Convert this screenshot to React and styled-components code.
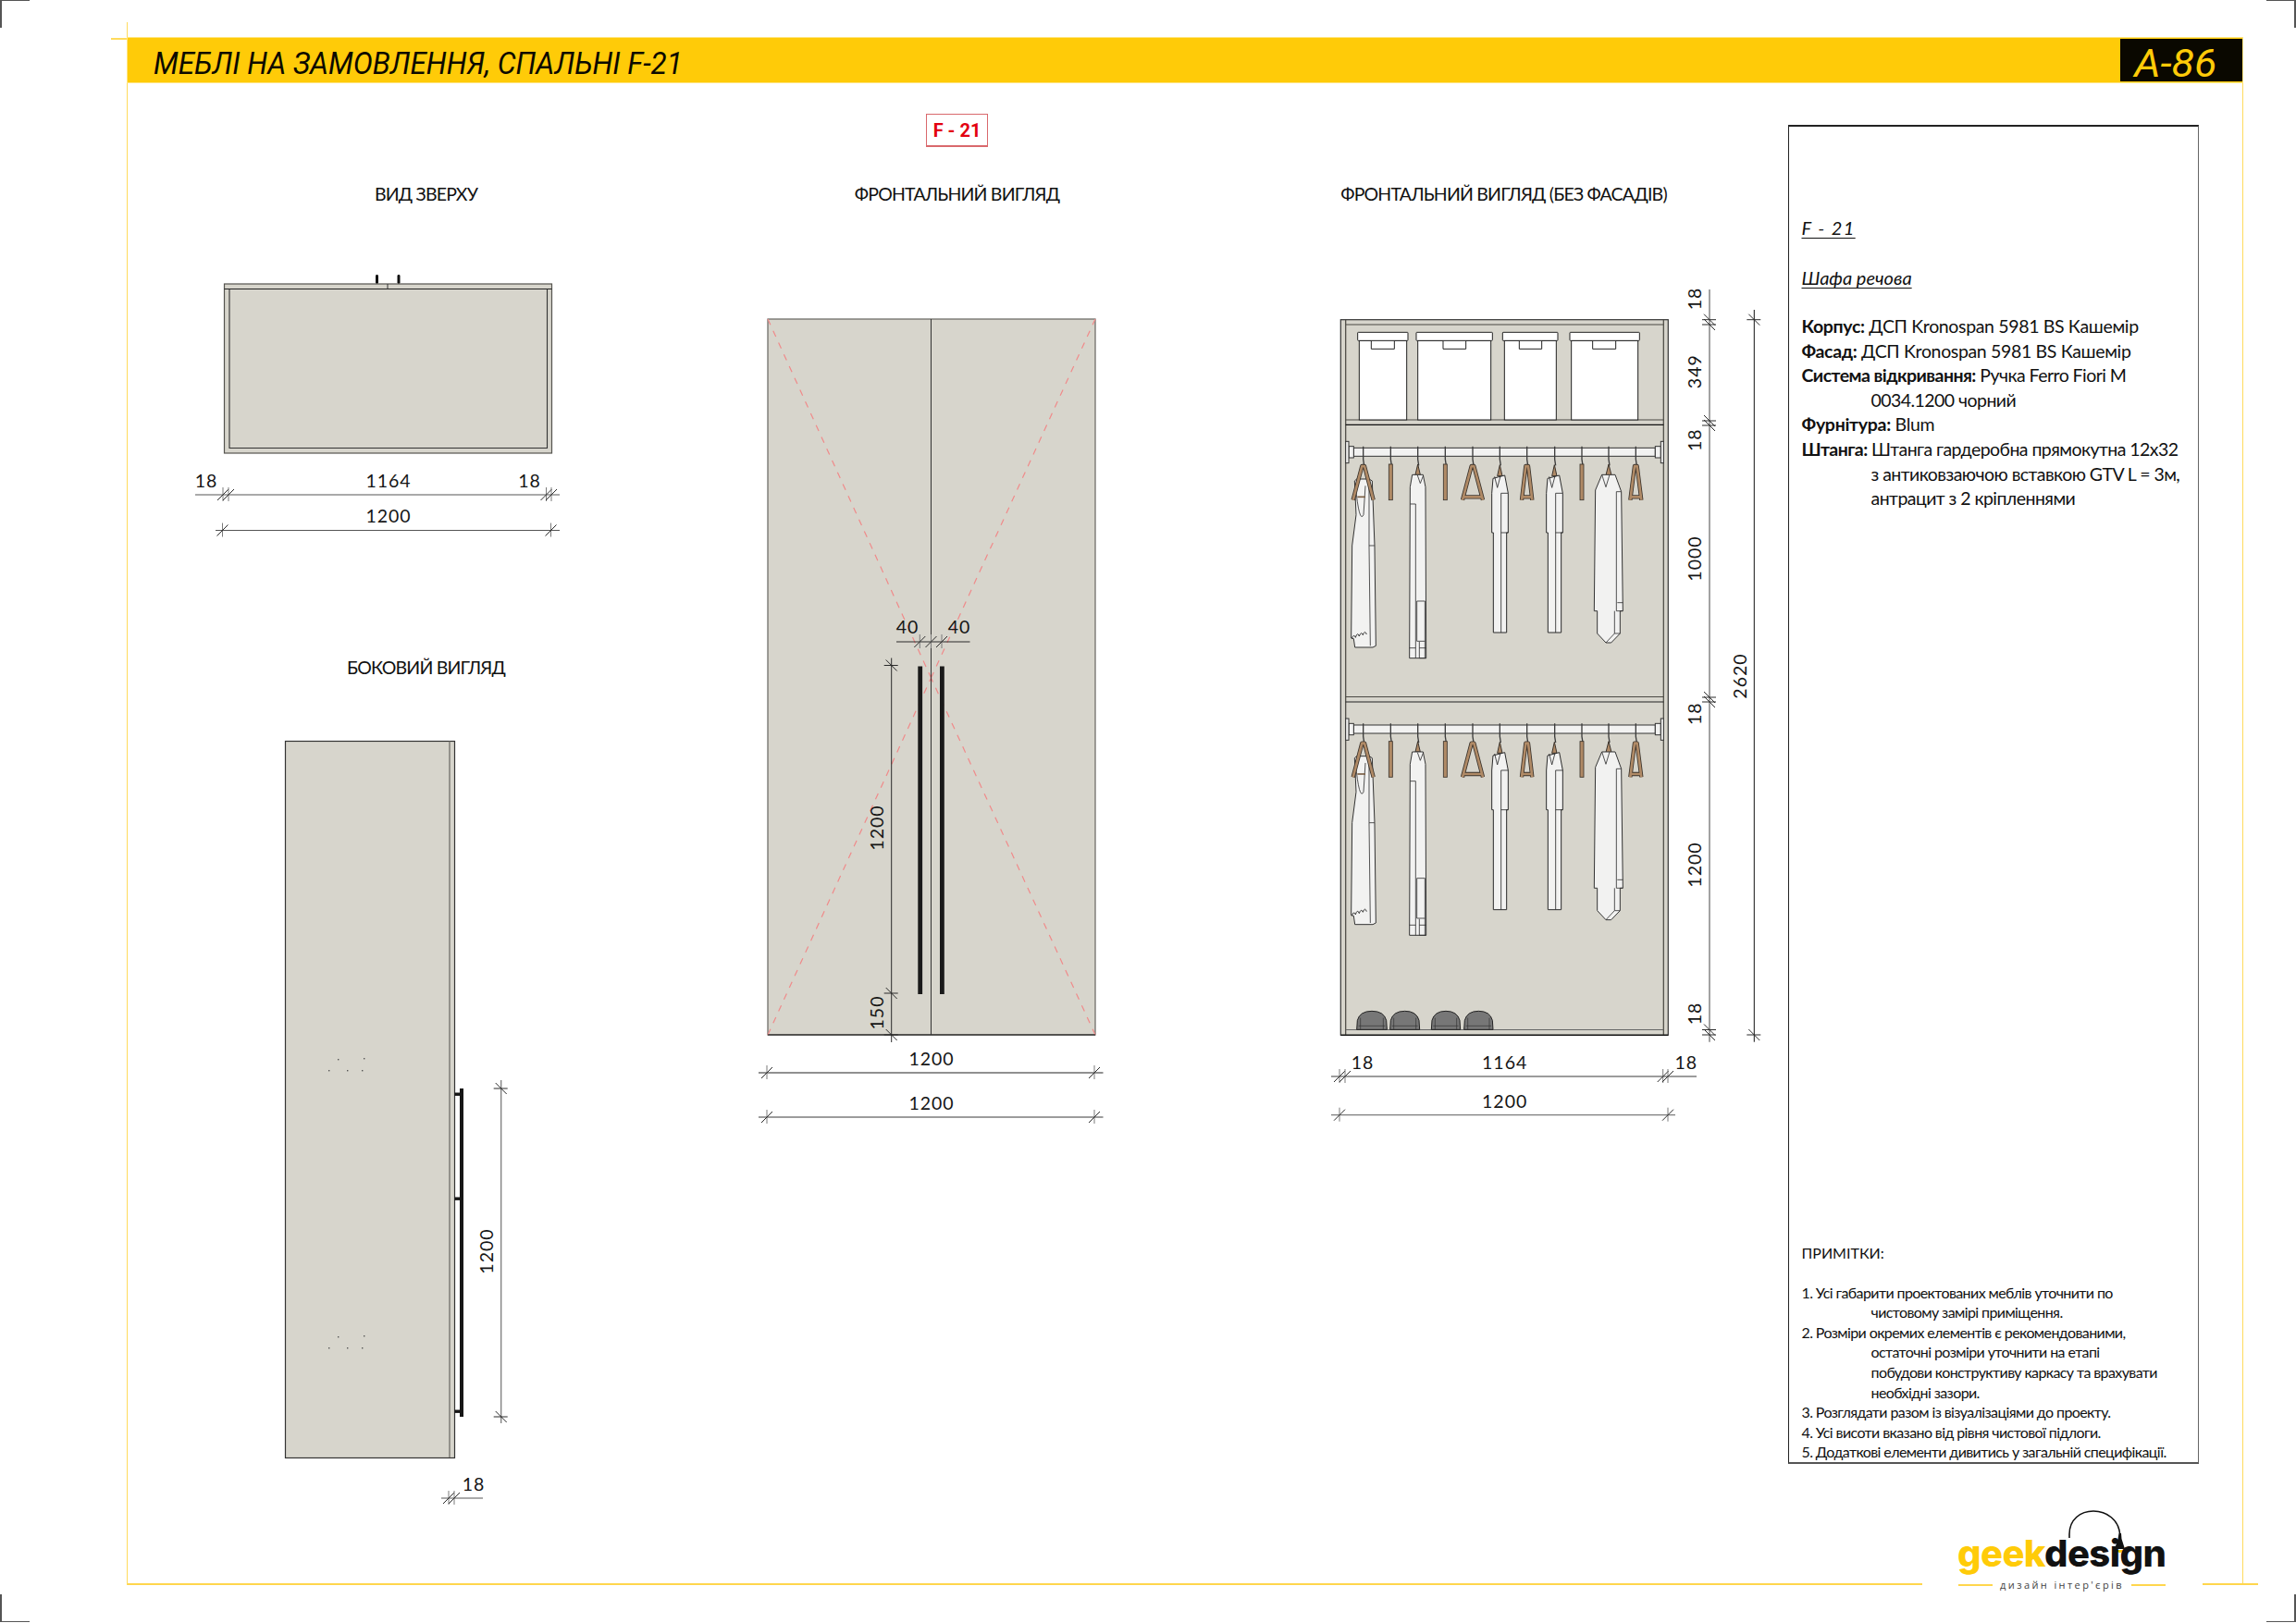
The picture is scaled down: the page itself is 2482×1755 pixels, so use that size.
import React from 'react'
import styled, { createGlobalStyle } from 'styled-components'

const GlobalStyle = createGlobalStyle`
html, body {
    margin: 0;
    padding: 0;
    background: #fff;
}
body {
    font-family: Lato, "Noto Sans", sans-serif;
    color: #111;
}
`

const DARK = '#2b2b2b'
const GREY = '#7b7b7b'
const FILL = '#d7d5cc'
const BROWN = '#b08a66'
const CLOTH = '#f2f2f1'

// dimension helpers, coordinates are sheet pixels
const HDim = ({ x1, x2, y, ticks, color = DARK, width = 1 }) => (
    <g>
        <line x1={x1} x2={x2} y1={y} y2={y} stroke={color} strokeWidth={width} />
        {ticks.map((t) => (
            <g key={t} stroke={DARK} strokeWidth="1">
                <line x1={t} x2={t} y1={y - 8} y2={y + 7} stroke={GREY} />
                <line x1={t - 6} x2={t + 6} y1={y + 6} y2={y - 6} />
            </g>
        ))}
    </g>
)

const VDim = ({ x, y1, y2, ticks, color = DARK, width = 1 }) => (
    <g>
        <line x1={x} x2={x} y1={y1} y2={y2} stroke={color} strokeWidth={width} />
        {ticks.map((t) => (
            <g key={t} stroke={DARK} strokeWidth="1">
                <line x1={x - 8} x2={x + 7} y1={t} y2={t} />
                <line x1={x - 6} x2={x + 6} y1={t - 6} y2={t + 6} />
            </g>
        ))}
    </g>
)

const Num = ({ x, y, children }) => <DimText x={x} y={y + 1} textAnchor="middle">{children}</DimText>
const VNum = ({ x, y, children }) => (
    <DimText x={x} y={y} textAnchor="middle" transform={`rotate(-90 ${x} ${y})`}>{children}</DimText>
)

const TopView = () => (
    <DrawingSvg $w={420} $h={310} viewBox="200 280 420 310">
        <rect x="406" y="297" width="3" height="10" rx="1.4" fill="#111" />
        <rect x="429.5" y="297" width="3" height="10" rx="1.4" fill="#111" />
        <rect x="242.5" y="307" width="354" height="183" fill={FILL} stroke="#55544f" strokeWidth="1.2" />
        <line x1="242.5" x2="596.5" y1="312.5" y2="312.5" stroke="#222" />
        <line x1="419" x2="419" y1="307" y2="312.5" stroke="#333" />
        <path d="M248 312.5 V484.5 H591.5 V312.5" fill="none" stroke="#333" strokeWidth="1.1" />
        <HDim x1={211} x2={605} y={535} ticks={[241, 247, 590.5, 596]} color="#555" />
        <HDim x1={233} x2={605} y={573.5} ticks={[240.5, 595.5]} color="#555" />
        <Num x={223} y={525.5}>18</Num>
        <Num x={420} y={525.5}>1164</Num>
        <Num x={572.5} y={525.5}>18</Num>
        <Num x={420} y={564}>1200</Num>
    </DrawingSvg>
)

const sideDots = [[365, 1145], [393, 1144], [355, 1157], [375, 1157], [391, 1157], [365, 1445], [393, 1444], [355, 1457], [375, 1457], [391, 1457]]

const SideView = () => (
    <DrawingSvg $w={420} $h={860} viewBox="200 780 420 860">
        <rect x="308.5" y="801.5" width="183" height="775" fill={FILL} stroke="#333" strokeWidth="1.2" />
        <line x1="486" x2="486" y1="801.5" y2="1576" stroke="#77766f" strokeWidth="1.4" />
        {sideDots.map(([x, y]) => <rect key={x + '-' + y} x={x} y={y} width="1.4" height="1.4" fill="#555" />)}
        <rect x="497" y="1177" width="4" height="355" fill="#161616" />
        <rect x="491.5" y="1181.5" width="6" height="3.4" fill="#161616" />
        <rect x="491.5" y="1294.5" width="6" height="3.4" fill="#161616" />
        <rect x="491.5" y="1524.5" width="6" height="3.4" fill="#161616" />
        <VDim x={541.7} y1={1168} y2={1539} ticks={[1177, 1532]} color={GREY} width={1.3} />
        <VNum x={533} y={1353}>1200</VNum>
        <HDim x1={477} x2={522} y={1620} ticks={[485, 491]} color="#555" />
        <Num x={512} y={1611}>18</Num>
    </DrawingSvg>
)

const FrontView = () => (
    <DrawingSvg $w={390} $h={900} viewBox="810 335 390 900">
        <rect x="830" y="345" width="354" height="774" fill={FILL} stroke="#66655f" strokeWidth="1.2" />
        <g stroke="#f08a8a" strokeWidth="1.2" strokeDasharray="7 7" fill="none">
            <line x1="830" y1="345" x2="1006.5" y2="733" />
            <line x1="1184" y1="345" x2="1006.5" y2="733" />
            <line x1="830" y1="1119" x2="1006.5" y2="733" />
            <line x1="1184" y1="1119" x2="1006.5" y2="733" />
        </g>
        <line x1="830" x2="1184" y1="1119" y2="1119" stroke="#111" strokeWidth="1.2" />
        <line x1="1006.5" x2="1006.5" y1="345" y2="1119" stroke="#333" />
        <rect x="992.3" y="720.5" width="4.8" height="354.5" fill="#1a1a1a" />
        <rect x="1016" y="720.5" width="4.8" height="354.5" fill="#1a1a1a" />
        <HDim x1={969} x2={1048.5} y={694} ticks={[994.3, 1006.5, 1018]} />
        <VDim x={963.7} y1={711.5} y2={1127} ticks={[719.5, 1074, 1119]} />
        <Num x={981} y={684}>40</Num>
        <Num x={1037} y={684}>40</Num>
        <VNum x={955} y={895}>1200</VNum>
        <VNum x={955} y={1095}>150</VNum>
        <HDim x1={820} x2={1192.5} y={1160} ticks={[829, 1183]} color="#222" />
        <HDim x1={820} x2={1192.5} y={1208} ticks={[829, 1183]} color={GREY} width={1.4} />
        <Num x={1007} y={1150.5}>1200</Num>
        <Num x={1007} y={1198.5}>1200</Num>
    </DrawingSvg>
)

// one hanging set, in crop units (3 per sheet pixel), rail at y=553..580
const hookXs = [131, 220, 308, 397, 486, 574, 662, 752, 840, 927, 1015]

const Triangle = ({ cx, half, bar = true }) => {
    const d = `M${cx - half} 722 L${cx - 4} 612 H${cx + 4} L${cx + half} 722` + (bar ? ` M${cx - half} 712 H${cx + half}` : '')
    return (
        <g fill="none" strokeLinejoin="round">
            <path d={d} stroke="#3a332c" strokeWidth="13" />
            <path d={d} stroke={BROWN} strokeWidth="8" />
        </g>
    )
}

const Flat = ({ cx }) => <rect x={cx - 6} y="606" width="12" height="116" fill={BROWN} stroke="#3a332c" strokeWidth="2.5" />

const Trousers = ({ dx }) => (
    <g transform={`translate(${dx} 0)`}>
        <path d="M566 644 L574 608 L582 644 Z" fill={BROWN} stroke="#3a332c" strokeWidth="3" />
        <path d="M552 652 L590 642 L601 700 V828 H596 V1152 H553 V828 H548 V700 Z" fill={CLOTH} stroke="#2a2a2a" strokeWidth="3" />
        <path d="M578 700 H601 M578 700 V1152 M578 828 H601 M557 646 L566 682 L576 644" fill="none" stroke="#2a2a2a" strokeWidth="2.5" />
    </g>
)

const Hanging = ({ dy }) => (
    <g transform={`translate(0 ${dy})`} stroke="#333">
        <rect x="100" y="553" width="978" height="27" fill={CLOTH} strokeWidth="3" />
        <rect x="84" y="548" width="16" height="37" fill={CLOTH} strokeWidth="3" />
        <rect x="74" y="532" width="10" height="70" fill={CLOTH} strokeWidth="3" />
        <rect x="1078" y="548" width="18" height="37" fill={CLOTH} strokeWidth="3" />
        <rect x="1096" y="532" width="9" height="70" fill={CLOTH} strokeWidth="3" />
        {hookXs.map((x) => <path key={x} d={`M${x} 548 V590 L${x + 3} 610`} fill="none" stroke="#3c3c3c" strokeWidth="4" />)}
        <Flat cx={220} />
        <Flat cx={397} />
        <Flat cx={840} />
        <Triangle cx={486} half={33} />
        <Triangle cx={662} half={17} />
        <Triangle cx={1015} half={18} />

        {/* dress on the left */}
        <path d="M103 660 L110 654 L150 654 L160 660 L168 870 L172 1195 L162 1200 L104 1200 L100 1172 L92 1170 L95 870 L108 770 Z" fill={CLOTH} strokeWidth="3" />
        <path d="M106 676 Q118 800 132 770 L138 676 M150 654 V870 H168 M150 870 L154 1195" fill="none" strokeWidth="2.5" />
        <path d="M94 1172 q6 -18 12 -4 q6 -20 12 -4 q6 -18 12 -4 q6 -18 12 -2" fill="none" strokeWidth="3" />
        <Triangle cx={131} half={33} bar={false} />
        <path d="M112 712 H138" stroke="#7a5f45" strokeWidth="5" />

        {/* long trousers */}
        <path d="M300 640 L308 606 L316 640 Z" fill={BROWN} stroke="#3a332c" strokeWidth="3" />
        <path d="M290 640 L325 640 L333 680 L335 1235 H281 L283 680 Z" fill={CLOTH} strokeWidth="3" />
        <path d="M283 735 H301 M301 735 V1235 M305 1050 H331 V1235 M305 1050 V1180 H331 M281 1202 H301 M313 1182 V1235 H335 M313 1202 H335" fill="none" strokeWidth="2.5" />
        <path d="M307 642 L316 668 L326 642" fill="none" strokeWidth="2.5" />

        <Trousers dx={0} />
        <Trousers dx={177} />

        {/* coat */}
        <path d="M912 665 L927 606 L942 665 Z" fill={BROWN} stroke="#3a332c" strokeWidth="3" />
        <path d="M905 640 L948 640 L968 695 L973 1082 H964 V1155 L935 1185 H918 L890 1155 V1082 H880 L884 690 Z" fill={CLOTH} strokeWidth="3" />
        <path d="M952 695 H968 M952 695 V1082 H973 M955 1055 H973 M946 1082 V1155 H964 M946 1155 L918 1185 M905 640 L918 680 L930 640" fill="none" strokeWidth="2.5" />
    </g>
)

const boxes = [
    { lid: [113, 276], body: [118, 272], pull: [157, 232] },
    { lid: [303, 550], body: [308, 545], pull: [390, 464] },
    { lid: [583, 762], body: [589, 757], pull: [637, 710] },
    { lid: [801, 1027], body: [806, 1022], pull: [875, 950] },
]

const shoes = [[110, 98], [218, 96], [352, 94], [458, 94]]

const InsideView = () => (
    <DrawingSvg $w={500} $h={950} viewBox="1430 300 500 950">
        <rect x="1449.3" y="345.7" width="354" height="773.5" fill={FILL} stroke="#333" strokeWidth="1.2" />
        <path d="M1454.7 345.7 V1119 M1798.3 345.7 V1119" stroke="#46453f" strokeWidth="1.2" />
        <g fill="none" stroke="#4a4943" strokeWidth="1.2">
            <path d="M1454.7 351 H1798.3" />
            <path d="M1454.7 454 H1798.3" />
            <path d="M1454.7 459.3 H1798.3" stroke="#111" />
            <path d="M1454.7 753.5 H1798.3" />
            <path d="M1454.7 759 H1798.3" stroke="#222" />
            <path d="M1454.7 1113.5 H1798.3" stroke="#666" />
        </g>
        <line x1="1449.3" x2="1803.3" y1="1119.3" y2="1119.3" stroke="#111" strokeWidth="1.3" />

        <g transform="translate(1430 300) scale(0.33333)" stroke="#222" strokeWidth="3">
            {boxes.map((b) => (
                <g key={b.lid[0]}>
                    <rect x={b.body[0]} y="205" width={b.body[1] - b.body[0]} height="257" fill="#fff" />
                    <path d={`M${b.pull[0]} 205 V232 H${b.pull[1]} V205`} fill="#fff" />
                    <rect x={b.lid[0]} y="178" width={b.lid[1] - b.lid[0]} height="27" rx="2" fill="#fff" />
                </g>
            ))}
            <Hanging dy={0} />
            <Hanging dy={899} />
        </g>
        <g transform="translate(1430 760) scale(0.33333)">
            {shoes.map(([x, w]) => (
                <g key={x}>
                    <path d={`M${x} 1060 L${x + 2} 1030 Q${x + 10} 1000 ${x + w / 2} 1000 Q${x + w - 10} 1000 ${x + w - 2} 1030 L${x + w} 1060 Z`} fill="#777" stroke="#222" strokeWidth="3" />
                    <path d={`M${x + 12} 1060 V1022 M${x + w - 12} 1060 V1022 M${x + 6} 1048 H${x + w - 6}`} stroke="#333" strokeWidth="2" fill="none" />
                </g>
            ))}
        </g>

        <VDim x={1848} y1={313} y2={1126.7} ticks={[345.7, 351, 455, 460, 754, 759, 1113.5, 1119]} color={GREY} width={1.4} />
        <VDim x={1896.3} y1={335} y2={1126.7} ticks={[345.7, 1119]} color="#111" />
        <VNum x={1839} y={323}>18</VNum>
        <VNum x={1839} y={401.7}>349</VNum>
        <VNum x={1839} y={475.7}>18</VNum>
        <VNum x={1839} y={604}>1000</VNum>
        <VNum x={1839} y={771.7}>18</VNum>
        <VNum x={1839} y={935}>1200</VNum>
        <VNum x={1839} y={1096}>18</VNum>
        <VNum x={1888} y={731}>2620</VNum>

        <HDim x1={1439} x2={1834} y={1164} ticks={[1448, 1454, 1797.7, 1803]} color={GREY} width={1.3} />
        <HDim x1={1439} x2={1811} y={1205.7} ticks={[1448, 1803]} color={GREY} width={1.3} />
        <Num x={1473} y={1155}>18</Num>
        <Num x={1626.7} y={1155}>1164</Num>
        <Num x={1822.7} y={1155}>18</Num>
        <Num x={1626.7} y={1196.7}>1200</Num>
    </DrawingSvg>
)

const specs = [
    { label: 'Корпус:', text: 'ДСП Kronospan 5981 BS Кашемір', track: -0.35 },
    { label: 'Фасад:', text: 'ДСП Kronospan 5981 BS Кашемір', track: -0.35 },
    { label: 'Система відкривання:', text: 'Ручка Ferro Fiori M', more: ['0034.1200 чорний'], track: -0.55 },
    { label: 'Фурнітура:', text: 'Blum', track: -0.3 },
    { label: 'Штанга:', text: 'Штанга гардеробна прямокутна 12х32', more: ['з антиковзаючою вставкою GTV L = 3м,', 'антрацит з 2 кріпленнями'], track: -0.55 },
]

const notes = [
    { text: '1. Усі габарити проектованих меблів уточнити по', more: ['чистовому замірі приміщення.'] },
    { text: '2. Розміри окремих елементів є рекомендованими,', more: ['остаточні розміри уточнити на етапі', 'побудови конструктиву каркасу та врахувати', 'необхідні зазори.'] },
    { text: '3. Розглядати разом із візуалізаціями до проекту.' },
    { text: '4. Усі висоти вказано від рівня чистової підлоги.' },
    { text: '5. Додаткові елементи дивитись у загальній специфікації.' },
]

const App = () => {
    return (
        <Page>
            <GlobalStyle />
            <CropMark $top $left />
            <CropMark $top />
            <CropMark $left />
            <CropMark />
            <TopTick />
            <Sheet>
                <Header>
                    <HeaderTitle>МЕБЛІ НА ЗАМОВЛЕННЯ, СПАЛЬНІ F-21</HeaderTitle>
                    <SheetCode><span>А-86</span></SheetCode>
                </Header>
                <Body>
                    <Column $width={522} $left={61.5} $top={72}>
                        <ViewTitle>ВИД ЗВЕРХУ</ViewTitle>
                        <DrawingSlot $top={55}><TopView /></DrawingSlot>
                        <ViewTitle $top={117}>БОКОВИЙ ВИГЛЯД</ViewTitle>
                        <DrawingSlot $top={43}><SideView /></DrawingSlot>
                    </Column>
                    <Column $width={450} $left={88} $top={0}>
                        <Badge>F - 21</Badge>
                        <ViewTitle $top={36}>ФРОНТАЛЬНИЙ ВИГЛЯД</ViewTitle>
                        <DrawingSlot $top={110}><FrontView /></DrawingSlot>
                    </Column>
                    <Column $width={500} $left={170} $top={72}>
                        <ViewTitle $width={392}>ФРОНТАЛЬНИЙ ВИГЛЯД (БЕЗ ФАСАДІВ)</ViewTitle>
                        <DrawingSlot $top={75}><InsideView /></DrawingSlot>
                    </Column>
                    <InfoPanel>
                        <div>
                            <ProductCode>F - 21</ProductCode>
                            <ProductName>Шафа речова</ProductName>
                            <SpecList>
                                {specs.map((s) => (
                                    <SpecGroup key={s.label} $track={s.track}>
                                        <div><b>{s.label}</b> {s.text}</div>
                                        {s.more && s.more.map((m) => <SpecMore key={m}>{m}</SpecMore>)}
                                    </SpecGroup>
                                ))}
                            </SpecList>
                        </div>
                        <NotesBlock>
                            <NotesTitle>ПРИМІТКИ:</NotesTitle>
                            {notes.map((n) => (
                                <React.Fragment key={n.text}>
                                    <div>{n.text}</div>
                                    {n.more && n.more.map((m) => <NoteMore key={m}>{m}</NoteMore>)}
                                </React.Fragment>
                            ))}
                        </NotesBlock>
                    </InfoPanel>
                </Body>
                <Footer>
                    <FooterRule />
                    <Logo>
                        <LampMark viewBox="0 0 70 50">
                            <path d="M2 30 V26 C2 10 14 1 28 1 C43 1 55 11 56.5 25" fill="none" stroke="#111" strokeWidth="1.6" />
                            <path d="M55.5 25 H58 L58.5 31 L62 42 H51 L54.5 31 Z" fill="#111" />
                            <path d="M53 43 H60 Q59 46 56.5 46 Q54 46 53 43 Z" fill="#ffcb08" />
                        </LampMark>
                        <LogoWord><em>geek</em>design</LogoWord>
                        <LogoTagRow>
                            <TagRule />
                            <LogoTag>дизайн інтер'єрів</LogoTag>
                            <TagRule />
                        </LogoTagRow>
                    </Logo>
                    <FooterRule $short />
                </Footer>
            </Sheet>
        </Page>
    )
}

const Page = styled.div`
position: relative;
width: 2482px;
height: 1755px;
overflow: hidden;
background: #fff;
padding-top: 41px;
box-sizing: border-box;
`
const CropMark = styled.div`
position: absolute;
width: 30px;
height: 29px;
${p => p.$top ? 'top: 0;' : 'bottom: 1px;'}
${p => p.$left ? 'left: 0;' : 'right: 0;'}
border-style: solid;
border-color: #555;
border-width: ${p => `${p.$top ? 1 : 0}px ${p.$left ? 0 : 2}px ${p.$top ? 0 : 1}px ${p.$left ? 2 : 0}px`};
`
const TopTick = styled.div`
position: absolute;
left: 120px;
top: 24px;
width: 17px;
height: 17px;
border-right: 1px solid #ffdb5c;
border-bottom: 2px solid #ffdb5c;
`
const Sheet = styled.div`
position: relative;
margin-left: 137px;
width: 2288px;
height: 1673px;
border-left: 1.5px solid #ffdb5c;
border-right: 1.5px solid #ffdb5c;
box-sizing: border-box;
display: flex;
flex-direction: column;
`
const Header = styled.div`
height: 48px;
flex-shrink: 0;
display: flex;
align-items: stretch;
justify-content: space-between;
background: #ffcb08;
box-shadow: 0 0 0 1px #ffe580;
`
const HeaderTitle = styled.h1`
margin: 0 0 0 28px;
padding-top: 4px;
font-family: Roboto, "Noto Sans", sans-serif;
font-style: italic;
font-weight: 400;
font-size: 33px;
line-height: 48px;
color: #0c0a00;
white-space: nowrap;
transform: scaleX(.955);
transform-origin: left center;
`
const SheetCode = styled.div`
width: 132px;
margin: 1px 0;
box-sizing: border-box;
padding: 3px 12px 0 0;
background: #0a0800;
color: #ffcb08;
font-family: Roboto, "Noto Sans", sans-serif;
font-style: italic;
font-weight: 400;
font-size: 43px;
line-height: 46px;
text-align: center;
span {
    display: inline-block;
    transform: scaleX(1.04);
}
`
const Body = styled.div`
display: flex;
align-items: flex-start;
height: 1528px;
flex-shrink: 0;
padding-top: 34px;
box-sizing: border-box;
`
const Column = styled.div`
flex: 0 0 ${p => p.$width}px;
margin-left: ${p => p.$left}px;
padding-top: ${p => p.$top}px;
display: flex;
flex-direction: column;
align-items: flex-start;
`
const ViewTitle = styled.h2`
margin: ${p => p.$top || 0}px 0 0;
width: ${p => p.$width ? p.$width + 'px' : '100%'};
height: 30px;
line-height: 30px;
font-family: Lato, "Noto Sans", sans-serif;
font-size: 19.5px;
font-weight: 400;
letter-spacing: -0.8px;
text-align: center;
color: #111;
white-space: nowrap;
`
const Badge = styled.div`
align-self: center;
width: 67px;
height: 36px;
box-sizing: border-box;
border: 1px solid #d9686c;
border-bottom-width: 2px;
color: #e3000f;
font-family: Roboto, "Liberation Sans", sans-serif;
font-weight: 700;
font-size: 20px;
line-height: 35px;
text-align: center;
`
const DrawingSlot = styled.div`
margin-top: ${p => p.$top}px;
`
const DrawingSvg = styled.svg.attrs(p => ({ width: p.$w, height: p.$h }))`
display: block;
overflow: visible;
`
const DimText = styled.text`
font-family: Lato, "Noto Sans", sans-serif;
font-size: 19.5px;
letter-spacing: 1px;
fill: #151515;
`
const InfoPanel = styled.aside`
flex: 0 0 444px;
min-width: 0;
margin: 12px 0 0 3px;
height: 1448px;
box-sizing: border-box;
border: 1px solid #222;
border-top-width: 2px;
border-right-color: #666;
border-bottom: 2px solid #555;
padding: 96px 10px 0 14px;
display: flex;
flex-direction: column;
justify-content: space-between;
`
const ProductCode = styled.div`
font-style: italic;
font-size: 20px;
letter-spacing: 1.4px;
line-height: 26px;
text-decoration: underline;
text-underline-offset: 3px;
text-decoration-thickness: 1px;
`
const ProductName = styled(ProductCode)`
margin-top: 28px;
letter-spacing: 0;
`
const SpecList = styled.div`
margin-top: 27px;
font-size: 19.5px;
line-height: 26.6px;
white-space: nowrap;
b {
    font-weight: 700;
}
`
const SpecGroup = styled.div`
letter-spacing: ${p => p.$track}px;
`
const SpecMore = styled.div`
padding-left: 75px;
`
const NotesBlock = styled.div`
font-size: 16px;
line-height: 21.6px;
letter-spacing: -0.6px;
white-space: nowrap;
`
const NotesTitle = styled.div`
margin-bottom: 21.5px;
letter-spacing: 0;
`
const NoteMore = styled.div`
padding-left: 75px;
`
const Footer = styled.div`
flex: 1;
display: flex;
align-items: flex-end;
`
const FooterRule = styled.div`
flex: ${p => p.$short ? '0 0 60px' : '1'};
height: 2px;
background: #ffd64d;
margin-right: ${p => p.$short ? '-17px' : '0'};
`
const Logo = styled.div`
position: relative;
flex: 0 0 303px;
height: 88px;
margin-bottom: -7px;
`
const LampMark = styled.svg`
position: absolute;
left: 157px;
top: 0;
width: 70px;
height: 50px;
`
const LogoWord = styled.div`
position: absolute;
left: 38px;
top: 23px;
font-family: Inter, "Open Sans", sans-serif;
font-weight: 800;
font-size: 40px;
line-height: 48px;
letter-spacing: -0.6px;
color: #111;
em {
    font-style: normal;
    color: #ffcb08;
}
`
const LogoTagRow = styled.div`
position: absolute;
left: 39px;
bottom: 0;
width: 224px;
display: flex;
align-items: center;
gap: 8px;
`
const TagRule = styled.div`
flex: 1;
height: 2px;
background: #ffd64d;
`
const LogoTag = styled.div`
font-family: "Open Sans", sans-serif;
font-size: 11px;
line-height: 14px;
letter-spacing: 2.4px;
color: #444;
white-space: nowrap;
`

export default App
